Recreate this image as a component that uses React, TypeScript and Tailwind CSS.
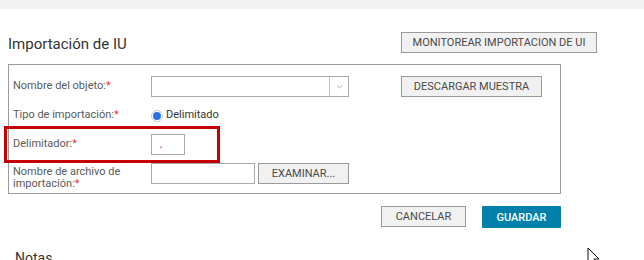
const Req = () => <span className="text-[#e53935]">*</span>

const Field = ({ children }: { children: React.ReactNode }) => (
  <div className="flex h-[21px] items-center">{children}</div>
)

const grayBtn =
  "h-[21px] border border-[#9a9a9a] bg-[#f1f1f1] text-[11px] text-[#4a4a4a] uppercase leading-none"

export default function App() {
  return (
    <div className="relative h-[260px] w-[644px] overflow-hidden bg-white font-['Roboto',sans-serif]">
      {/* top strip */}
      <div className="h-[9px] bg-[#f2f2f2]" />

      {/* header */}
      <div className="mt-[23px] flex h-[21px] items-center">
        <h1 className="ml-[8px] mt-[4px] w-[393px] text-[15px] leading-none text-[#333]">Importación de IU</h1>
        <button className={`${grayBtn} w-[196px]`}>Monitorear importacion de UI</button>
      </div>

      {/* form panel */}
      <div className="ml-[8px] mt-[11px] w-[553px] border border-[#9b9b9b] pt-[11px] pb-[9px]">
        <div className="flex flex-col gap-[8px]">
          <div className="flex h-[21px] items-center">
            <div className="w-[142px] pl-[4px] text-[11px] text-[#5a5a5a]">
              Nombre del objeto:<Req />
            </div>
            <div className="flex h-[21px] w-[198px] border border-[#a9a9a9] bg-white">
              <div className="flex-1" />
              <div className="flex w-[19px] items-center justify-center border-l border-[#c4c4c4]">
                <svg width="7" height="5" viewBox="0 0 7 5">
                  <path d="M1 1.5 L3.5 3.8 L6 1.5" fill="none" stroke="#999" strokeWidth="0.9" />
                </svg>
              </div>
            </div>
            <button className={`${grayBtn} ml-[52px] w-[141px]`}>Descargar muestra</button>
          </div>

          <Field>
            <div className="w-[142px] pl-[4px] text-[11px] text-[#5a5a5a]">
              Tipo de importación:<Req />
            </div>
            <span className="flex h-[12px] w-[12px] items-center justify-center rounded-full border border-[#c8c8c8] bg-white">
              <span className="h-[8px] w-[8px] rounded-full bg-[#2f6fe0]" />
            </span>
            <span className="ml-[3px] text-[11px] text-[#333]">Delimitado</span>
          </Field>

          <Field>
            <div className="w-[142px] pl-[4px] text-[11px] text-[#5a5a5a]">
              Delimitador:<Req />
            </div>
            <div className="flex h-[21px] w-[34px] items-center border border-[#a9a9a9] pl-[8px] text-[11px] text-[#9a6a90]">
              ,
            </div>
          </Field>

          <div className="flex h-[21px] items-start">
            <div className="w-[142px] pl-[4px] pt-[3px] text-[11px] leading-[12px] text-[#5a5a5a]">
              Nombre de archivo de
              <br />
              importación:<Req />
            </div>
            <div className="h-[21px] w-[104px] border border-[#a9a9a9]" />
            <button className={`${grayBtn} ml-[3px] w-[91px]`}>Examinar...</button>
          </div>
        </div>
      </div>

      {/* actions */}
      <div className="mt-[12px] flex w-[561px] justify-end gap-[16px]">
        <button className={`${grayBtn} w-[85px]`}>Cancelar</button>
        <button className="h-[22px] w-[79px] rounded-[1px] bg-[#0080ab] text-[11px] font-medium uppercase leading-none text-white">
          Guardar
        </button>
      </div>

      <div className="ml-[15px] mt-[20px] text-[14px] text-[#333]">Notas</div>

      {/* mouse pointer */}
      <svg className="absolute left-[587px] top-[247px]" width="14" height="20" viewBox="0 0 14 20">
        <path d="M1 1 L1 17 L5 13 L8 19 L10 18 L7 12 L12 12 Z" fill="white" stroke="#111" strokeWidth="1" />
      </svg>

      {/* red highlight annotation */}
      <div className="absolute left-[4px] top-[126px] h-[37px] w-[216px] border-[3px] border-[#c40000]" />
    </div>
  )
}
